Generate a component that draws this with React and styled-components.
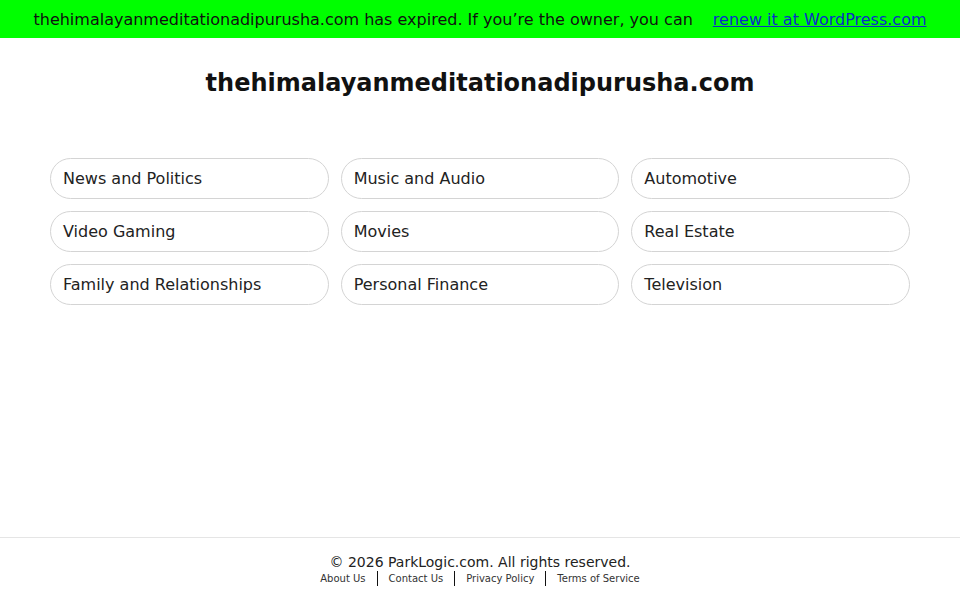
import styled, { createGlobalStyle } from 'styled-components';

const GlobalStyle = createGlobalStyle`
  html, body {
    margin: 0;
    padding: 0;
    background: #fff;
    font-family: "DejaVu Sans", sans-serif;
  }
`;

const Page = styled.div`
  min-height: 100vh;
  display: flex;
  flex-direction: column;
`;

const Banner = styled.div`
  height: 38px;
  background: #00ff00;
  display: flex;
  align-items: center;
  justify-content: center;
  font-size: 16px;
  color: #111;
  gap: 20px;
`;

const BannerLink = styled.a`
  color: #0a2fc8;
  text-decoration: underline;
`;

const Main = styled.main`
  flex: 1;
  padding: 0 50px;
`;

const Title = styled.h1`
  margin: 30px 0 0;
  text-align: center;
  font-size: 24px;
  line-height: 30px;
  font-weight: bold;
  color: #111;
`;

const Grid = styled.div`
  margin-top: 60px;
  display: grid;
  grid-template-columns: repeat(3, 1fr);
  gap: 12px;
`;

const Pill = styled.a`
  height: 41px;
  box-sizing: border-box;
  border: 1px solid #d4d4d4;
  border-radius: 21px;
  display: flex;
  align-items: center;
  padding-left: 12px;
  font-size: 16px;
  color: #222;
  text-decoration: none;
`;

const Footer = styled.footer`
  border-top: 1px solid #e5e5e5;
  height: 63px;
  display: flex;
  flex-direction: column;
  align-items: center;
  padding-top: 15px;
  box-sizing: border-box;
`;

const Copy = styled.div`
  font-size: 14px;
  line-height: 18px;
  color: #222;
`;

const Links = styled.div`
  display: flex;
  align-items: center;
  font-size: 10px;
  line-height: 14px;
`;

const FooterLink = styled.a`
  color: #333;
  text-decoration: none;
  padding: 0 11px;
  border-left: ${p => (p.$first ? 'none' : '1px solid #111')};
  line-height: 15px;
`;

const categories = [
  'News and Politics',
  'Music and Audio',
  'Automotive',
  'Video Gaming',
  'Movies',
  'Real Estate',
  'Family and Relationships',
  'Personal Finance',
  'Television',
];

const footerLinks = ['About Us', 'Contact Us', 'Privacy Policy', 'Terms of Service'];

const App = () => {
  return (
    <Page>
      <GlobalStyle />
      <Banner>
        <span>thehimalayanmeditationadipurusha.com has expired. If you’re the owner, you can</span>
        <BannerLink href="#">renew it at WordPress.com</BannerLink>
      </Banner>
      <Main>
        <Title>thehimalayanmeditationadipurusha.com</Title>
        <Grid>
          {categories.map(c => (
            <Pill key={c} href="#">{c}</Pill>
          ))}
        </Grid>
      </Main>
      <Footer>
        <Copy>© 2026 ParkLogic.com. All rights reserved.</Copy>
        <Links>
          {footerLinks.map((l, i) => (
            <FooterLink key={l} href="#" $first={i === 0}>{l}</FooterLink>
          ))}
        </Links>
      </Footer>
    </Page>
  );
};

export default App;
